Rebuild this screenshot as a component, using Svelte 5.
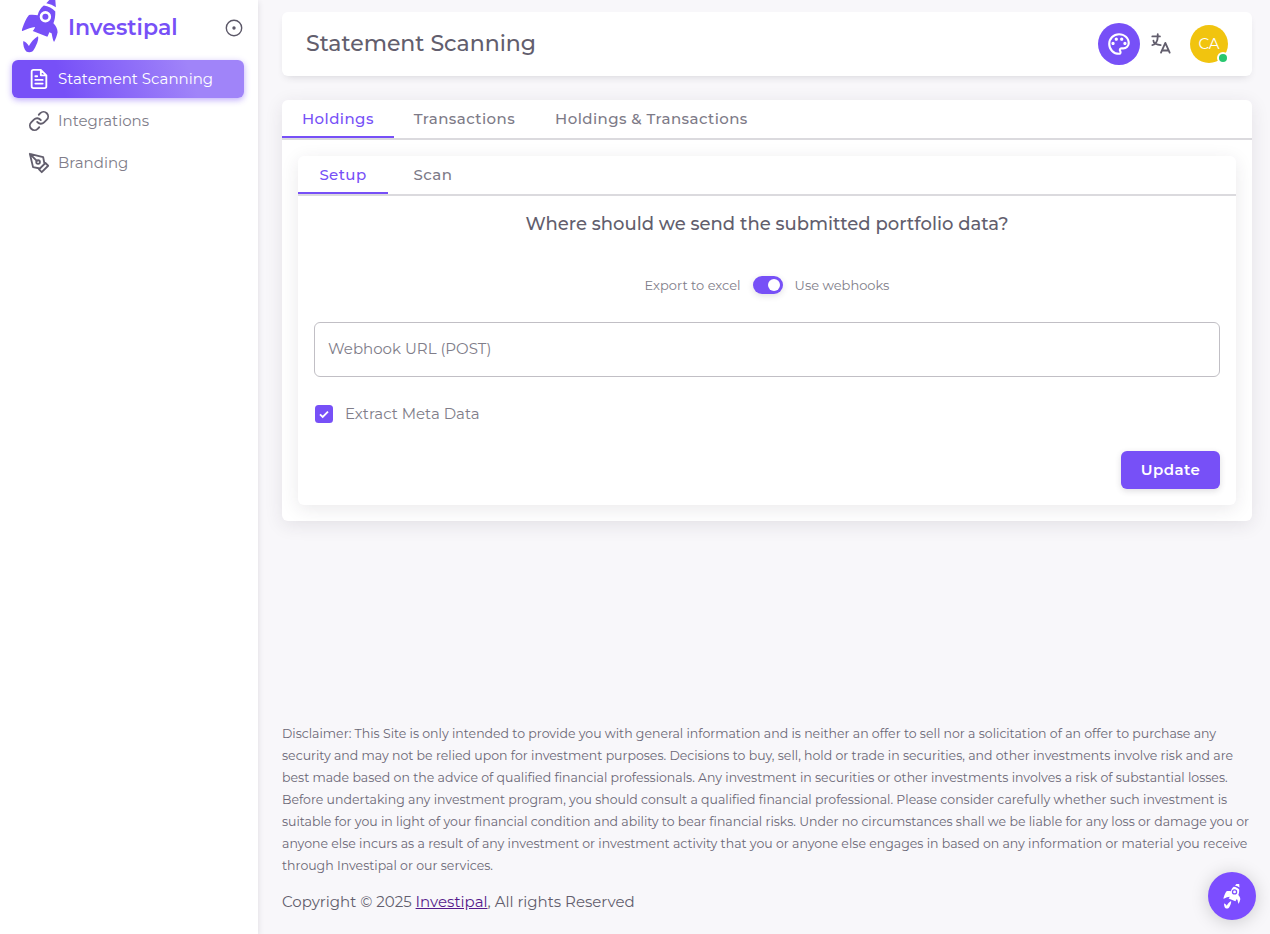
<script>
  const nav = [
    { label: 'Statement Scanning', icon: 'file', active: true },
    { label: 'Integrations', icon: 'link' },
    { label: 'Branding', icon: 'pen' },
  ];
  const tabs = ['Holdings', 'Transactions', 'Holdings & Transactions'];
  const innerTabs = ['Setup', 'Scan'];
</script>

{#snippet rocket()}
  <g fill="currentColor">
    <path d="M26.300 3.300 29.300 0h6l.6 7.300c-2.800-2-5.800-3.200-9.600-4z" />
    <path fill-rule="evenodd" d="M23.800 5.600c4.600.7 8.600 2.700 11.500 6 .1 4.500-.5 8.700-1.900 11.600 2.600 2.700 4.100 5.600 4.200 9.100-.7 3.500-1.800 6.500-3.400 9.500-1.200-.8-1.700-4.600-2.600-8.600l-2.300-1c-.6 1.600-1 3-2 4.600l-14.600-5.900c1.300-1.200 2.100-2.400 2.300-3.900-3.500.4-7.300 1.500-12.500 4.100-.8-.1-.7-1.300-.2-2.700 2-5.300 3.700-9.700 6.700-13.300 3.200-.8 6.400-.2 8.600.2 1.300-4.800 3.300-7.500 6.200-9.700zm1.600 5.500a5.700 5.700 0 1 0 0 11.400 5.700 5.700 0 0 0 0-11.400z" />
    <circle cx="25.400" cy="16.800" r="3" />
    <path d="M18 36.200c.8 2-.2 5.800-2 9.400-1.200 2.700-2.300 4.700-3.700 6-1.500.8-4.400.8-6 0-2.200-2.300-3.400-6.600-3.100-10.300 1.200-.7 4 1.700 5.700 4.600 2.100-3.700 5-7.500 9.100-9.700z" />
  </g>
{/snippet}

<div class="page">
  <aside>
    <div class="brand">
      <svg class="logo" width="40" height="54" viewBox="0 0 40 54">{@render rocket()}</svg>
      <span class="name">Investipal</span>
      <svg class="pin" width="20" height="20" viewBox="0 0 20 20" fill="none" stroke="currentColor" stroke-width="1.400">
        <circle cx="10" cy="10" r="7.700" /><circle cx="10" cy="10" r="1" fill="currentColor" />
      </svg>
    </div>
    <nav>
      {#each nav as item}
        <a class:active={item.active} href="#top">
          <svg width="22" height="22" viewBox="0 0 24 24" fill="none" stroke="currentColor" stroke-width="2" stroke-linecap="round" stroke-linejoin="round">
            {#if item.icon === 'file'}
              <path d="M14 2H6a2 2 0 0 0-2 2v16a2 2 0 0 0 2 2h12a2 2 0 0 0 2-2V8zM14 2v6h6M16 13H8M16 17H8M10 9H8" />
            {:else if item.icon === 'link'}
              <path d="M10 13a5 5 0 0 0 7.540.540l3-3a5 5 0 0 0-7.070-7.070l-1.720 1.710M14 11a5 5 0 0 0-7.540-.540l-3 3a5 5 0 0 0 7.070 7.070l1.710-1.710" />
            {:else}
              <path d="M12 19l7-7 3 3-7 7zM18 13l-1.500-7.500L2 2l3.500 14.500L13 18zM2 2l7.586 7.586" /><circle cx="11" cy="11" r="2" />
            {/if}
          </svg>
          <span>{item.label}</span>
        </a>
      {/each}
    </nav>
  </aside>

  <main>
    <header>
      <h1>Statement Scanning</h1>
      <button class="palette" aria-label="Theme">
        <svg width="26" height="26" viewBox="0 0 24 24" fill="currentColor"><path d="M12,22A10,10 0 0,1 2,12A10,10 0 0,1 12,2C17.5,2 22,6 22,11A6,6 0 0,1 16,17H14.2C13.9,17 13.7,17.2 13.7,17.5C13.7,17.6 13.8,17.7 13.8,17.8C14.2,18.3 14.4,18.9 14.4,19.5C14.5,20.9 13.4,22 12,22M12,4A8,8 0 0,0 4,12A8,8 0 0,0 12,20C12.3,20 12.5,19.8 12.5,19.5C12.5,19.3 12.4,19.2 12.4,19.1C12,18.6 11.8,18.1 11.8,17.5C11.8,16.1 12.9,15 14.3,15H16A4,4 0 0,0 20,11C20,7.1 16.4,4 12,4M6.5,10C7.3,10 8,10.7 8,11.5C8,12.3 7.3,13 6.5,13C5.7,13 5,12.3 5,11.5C5,10.7 5.7,10 6.5,10M9.5,6C10.3,6 11,6.7 11,7.5C11,8.3 10.3,9 9.5,9C8.7,9 8,8.3 8,7.5C8,6.7 8.7,6 9.5,6M14.5,6C15.3,6 16,6.7 16,7.5C16,8.3 15.3,9 14.5,9C13.7,9 13,8.3 13,7.5C13,6.7 13.7,6 14.5,6M17.5,10C18.3,10 19,10.7 19,11.5C19,12.3 18.3,13 17.5,13C16.7,13 16,12.3 16,11.5C16,10.7 16.7,10 17.5,10Z" /></svg>
      </button>
      <svg class="lang" width="26" height="26" viewBox="0 0 24 24" fill="none" stroke="currentColor" stroke-width="1.700" stroke-linecap="round" stroke-linejoin="round">
        <path d="M4 5h7M9 3v2c0 4.418-2.239 8-5 8M5 9c0 2.144 2.952 3.908 6.700 4M12 20l4-9 4 9M19.100 18h-6.200" />
      </svg>
      <div class="avatar">CA<i></i></div>
    </header>

    <section class="card">
      <div class="tabs">
        {#each tabs as t, i}<button class:active={i === 0}>{t}</button>{/each}
      </div>
      <div class="inner">
        <div class="tabs">
          {#each innerTabs as t, i}<button class:active={i === 0}>{t}</button>{/each}
        </div>
        <div class="body">
          <h2>Where should we send the submitted portfolio data?</h2>
          <div class="toggle"><span>Export to excel</span><span class="switch"></span><span>Use webhooks</span></div>
          <div class="field">Webhook URL (POST)</div>
          <div class="check">
            <svg width="18" height="18" viewBox="0 0 18 18" fill="none"><rect width="18" height="18" rx="3.500" fill="#7750f7" /><path d="M5 9.300 7.700 12 13 6.600" stroke="#fff" stroke-width="1.800" /></svg>
            <span>Extract Meta Data</span>
          </div>
          <button class="update">Update</button>
        </div>
      </div>
    </section>

    <footer>
      <p class="disclaimer">Disclaimer: This Site is only intended to provide you with general information and is neither an offer to sell nor a solicitation of an offer to purchase any security and may not be relied upon for investment purposes. Decisions to buy, sell, hold or trade in securities, and other investments involve risk and are best made based on the advice of qualified financial professionals. Any investment in securities or other investments involves a risk of substantial losses. Before undertaking any investment program, you should consult a qualified financial professional. Please consider carefully whether such investment is suitable for you in light of your financial condition and ability to bear financial risks. Under no circumstances shall we be liable for any loss or damage you or anyone else incurs as a result of any investment or investment activity that you or anyone else engages in based on any information or material you receive through Investipal or our services.</p>
      <p class="copy">Copyright © 2025 <a href="#top">Investipal</a>, All rights Reserved</p>
    </footer>
  </main>

  <button class="fab" aria-label="Assistant">
    <svg width="18" height="25" viewBox="1 0 38 53">{@render rocket()}</svg>
  </button>
</div>

<style>
  :global(body) { background: #f8f7fa; }
  .page {
    display: flex;
    height: 934px;
    overflow: hidden;
    background: #f8f7fa;
    color: #625e6d;
    font: 400 15px/22px Montserrat, Inter, sans-serif;
  }
  * { box-sizing: border-box; }
  button { border: 0; padding: 0; font: inherit; color: inherit; background: none; }
  h1, h2, p { margin: 0; }
  aside {
    width: 258px;
    flex: none;
    background: #fff;
    box-shadow: 0 2px 6px rgba(47, 43, 61, 0.14);
  }
  .brand { display: flex; align-items: center; height: 54px; padding: 0 14px 0 20px; color: #7750f7; }
  .name { flex: 1; margin-left: 8px; padding-top: 2px; font-size: 22px; font-weight: 600; line-height: 24px; }
  .pin { color: #5c5868; margin-top: 2px; }
  nav { display: flex; flex-direction: column; gap: 4px; padding: 6px 14px 0 12px; }
  nav a {
    display: flex;
    align-items: center;
    gap: 8px;
    height: 38px;
    padding-left: 16px;
    border-radius: 6px;
    color: #625e6d;
    text-decoration: none;
  }
  nav a span { color: #807d89; }
  nav a.active {
    color: #fff;
    background: linear-gradient(72.470deg, #7750f7 22.160%, #a084f9 76.470%);
    box-shadow: 0 2px 6px rgba(119, 80, 247, 0.48);
  }
  nav a.active span { color: #fff; }
  main { flex: 1; display: flex; flex-direction: column; padding: 12px 18px 0 24px; }
  header {
    display: flex;
    align-items: center;
    height: 64px;
    flex: none;
    padding: 0 24px;
    border-radius: 6px;
    background: #fff;
    box-shadow: 0 4px 8px -4px rgba(47, 43, 61, 0.2);
  }
  h1 { flex: 1; font-size: 22px; font-weight: 500; line-height: 30px; }
  .palette { display: grid; place-items: center; width: 42px; height: 42px; border-radius: 50%; background: #7750f7; color: #fff; }
  .lang { margin-left: 8px; }
  .avatar {
    position: relative;
    display: grid;
    place-items: center;
    width: 38px;
    height: 38px;
    margin-left: 16px;
    border-radius: 50%;
    background: #f1c40f;
    color: #fff;
  }
  .avatar i {
    position: absolute;
    right: 1px;
    bottom: 1px;
    width: 8px;
    height: 8px;
    border-radius: 50%;
    background: #28c76f;
    box-shadow: 0 0 0 2px #fff;
  }
  .card {
    height: 421px;
    flex: none;
    margin-top: 24px;
    border-radius: 6px;
    background: #fff;
    box-shadow: 0 4px 18px rgba(47, 43, 61, 0.1);
  }
  .tabs { display: flex; height: 40px; border-bottom: 2px solid #dbdade; }
  .tabs button {
    min-width: 90px;
    padding: 2px 20px 0;
    border-bottom: 2px solid transparent;
    color: #7d7a87;
    font-weight: 500;
    letter-spacing: 0.430px;
  }
  .tabs .active { color: #7750f7; border-color: #7750f7; }
  .inner {
    height: 349px;
    margin: 16px;
    border-radius: 6px;
    background: #fff;
    box-shadow: 0 4px 18px rgba(47, 43, 61, 0.1);
  }
  .body { display: flex; flex-direction: column; padding: 16px; }
  h2 { font-size: 18px; font-weight: 500; line-height: 24px; text-align: center; }
  .toggle { display: flex; align-items: center; justify-content: center; height: 38px; margin-top: 30px; font-size: 13px; color: #807d89; }
  .switch { position: relative; width: 30px; height: 18px; margin: 0 12px; border-radius: 9px; background: #7750f7; box-shadow: 0 2px 6px rgba(47, 43, 61, 0.15); }
  .switch::after { content: ''; position: absolute; top: 3px; right: 3px; width: 12px; height: 12px; border-radius: 50%; background: #fff; }
  .field { height: 55px; margin-top: 18px; padding: 15px 13px; border: 1px solid #c1bfc5; border-radius: 6px; color: #807d89; }
  .check { display: flex; align-items: center; gap: 12px; height: 38px; margin-top: 18px; padding-left: 1px; color: #807d89; }
  .update {
    align-self: flex-end;
    width: 99px;
    height: 38px;
    margin-top: 18px;
    border-radius: 6px;
    background: #7750f7;
    color: #fff;
    font-weight: 600;
    letter-spacing: 0.430px;
    box-shadow: 0 2px 6px rgba(47, 43, 61, 0.16);
  }
  footer { margin-top: auto; padding-bottom: 21px; }
  .disclaimer { font-size: 12.500px; line-height: 22px; color: #6b6776; }
  .copy { margin-top: 14px; line-height: 22px; }
  .copy a { color: #551a8b; }
  .fab {
    position: absolute;
    left: 1208px;
    top: 872px;
    display: grid;
    place-items: center;
    width: 48px;
    height: 48px;
    border-radius: 50%;
    background: #7c4dff;
    color: #fff;
    box-shadow: 0 2px 18px rgba(0, 0, 0, 0.18);
  }
</style>
